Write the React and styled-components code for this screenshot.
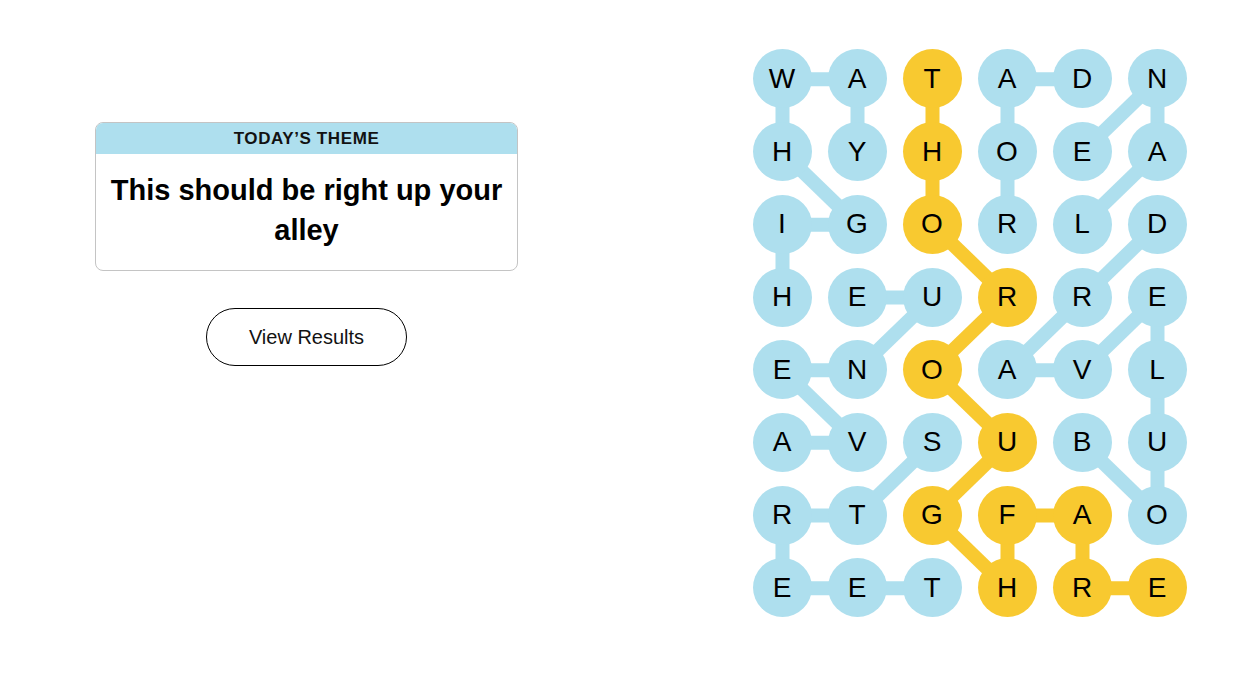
import React from "react";
import styled, { createGlobalStyle } from "styled-components";

const GlobalStyle = createGlobalStyle`
  html, body { margin: 0; padding: 0; background: #ffffff; }
  body { font-family: "Liberation Sans", Arial, sans-serif; color: #000; }
`;

const COL_W = 75;
const ROW_H = 72.7;
const DOT = 59;
const BLUE = "#aedfee";
const YELLOW = "#f8c930";

const LETTERS = [
  "WATADN",
  "HYHOEA",
  "IGORLD",
  "HEURRE",
  "ENOAVL",
  "AVSUBU",
  "RTGFAO",
  "EETHRE",
];

const WORDS = [
  { spangram: true, path: [[0, 2], [1, 2], [2, 2], [3, 3], [4, 2], [5, 3], [6, 2], [7, 3], [6, 3], [6, 4], [7, 4], [7, 5]] },
  { path: [[3, 0], [2, 0], [2, 1], [1, 0], [0, 0], [0, 1], [1, 1]] },
  { path: [[5, 0], [5, 1], [4, 0], [4, 1], [3, 2], [3, 1]] },
  { path: [[5, 2], [6, 1], [6, 0], [7, 0], [7, 1], [7, 2]] },
  { path: [[2, 3], [1, 3], [0, 3], [0, 4]] },
  { path: [[2, 4], [1, 5], [0, 5], [1, 4]] },
  { path: [[5, 4], [6, 5], [5, 5], [4, 5], [3, 5], [4, 4], [4, 3], [3, 4], [2, 5]] },
];

const spangramCells = new Set(
  WORDS.filter((w) => w.spangram).flatMap((w) => w.path.map(([r, c]) => `${r}-${c}`))
);

const Page = styled.main`
  display: flex;
  align-items: flex-start;
  padding-left: 95px;
  min-height: 673px;
  box-sizing: border-box;
`;

const LeftColumn = styled.section`
  width: 423px;
  margin-top: 122px;
  display: flex;
  flex-direction: column;
  align-items: center;
`;

const ThemeCard = styled.div`
  width: 100%;
  box-sizing: border-box;
  border: 1px solid #c4c4c4;
  border-radius: 8px;
  overflow: hidden;
  text-align: center;
`;

const ThemeHeader = styled.div`
  background: ${BLUE};
  height: 31px;
  display: flex;
  align-items: center;
  justify-content: center;
  font-size: 17px;
  font-weight: 700;
  letter-spacing: 0.6px;
  color: #121212;
`;

const ThemeTitle = styled.h1`
  margin: 0;
  padding: 16px 10px 20px;
  font-size: 29px;
  line-height: 40px;
  font-weight: 700;
  color: #000;
`;

const ResultsButton = styled.button`
  margin-top: 37px;
  width: 201px;
  height: 58px;
  border-radius: 29px;
  border: 1.5px solid #000;
  background: #fff;
  font-family: "Liberation Sans", Arial, sans-serif;
  font-size: 20px;
  color: #121212;
  cursor: pointer;
`;

const Board = styled.div`
  position: relative;
  margin-left: 226.5px;
  margin-top: 42.65px;
  display: grid;
  grid-template-columns: repeat(6, ${COL_W}px);
  grid-template-rows: repeat(8, ${ROW_H}px);
`;

const Connectors = styled.svg`
  position: absolute;
  left: 0;
  top: 0;
  width: ${COL_W * 6}px;
  height: ${ROW_H * 8}px;
  z-index: 0;
`;

const Cell = styled.div`
  position: relative;
  z-index: 1;
  display: flex;
  align-items: center;
  justify-content: center;
`;

const Dot = styled.div`
  width: ${DOT}px;
  height: ${DOT}px;
  border-radius: 50%;
  background: ${(p) => (p.$spangram ? YELLOW : BLUE)};
  display: flex;
  align-items: center;
  justify-content: center;
  font-size: 28px;
  color: #000;
  line-height: 1;
`;

const cx = (c) => c * COL_W + COL_W / 2;
const cy = (r) => r * ROW_H + ROW_H / 2;

export default function App() {
  return (
    <>
      <GlobalStyle />
      <Page>
        <LeftColumn>
          <ThemeCard>
            <ThemeHeader>TODAY’S THEME</ThemeHeader>
            <ThemeTitle>This should be right up your alley</ThemeTitle>
          </ThemeCard>
          <ResultsButton>View Results</ResultsButton>
        </LeftColumn>
        <Board>
          <Connectors viewBox={`0 0 ${COL_W * 6} ${ROW_H * 8}`}>
            {WORDS.map((w, wi) =>
              w.path.slice(1).map(([r, c], i) => {
                const [pr, pc] = w.path[i];
                return (
                  <line
                    key={`${wi}-${i}`}
                    x1={cx(pc)}
                    y1={cy(pr)}
                    x2={cx(c)}
                    y2={cy(r)}
                    stroke={w.spangram ? YELLOW : BLUE}
                    strokeWidth={14}
                  />
                );
              })
            )}
          </Connectors>
          {LETTERS.map((row, r) =>
            row.split("").map((ch, c) => (
              <Cell key={`${r}-${c}`}>
                <Dot $spangram={spangramCells.has(`${r}-${c}`)}>{ch}</Dot>
              </Cell>
            ))
          )}
        </Board>
      </Page>
    </>
  );
}
